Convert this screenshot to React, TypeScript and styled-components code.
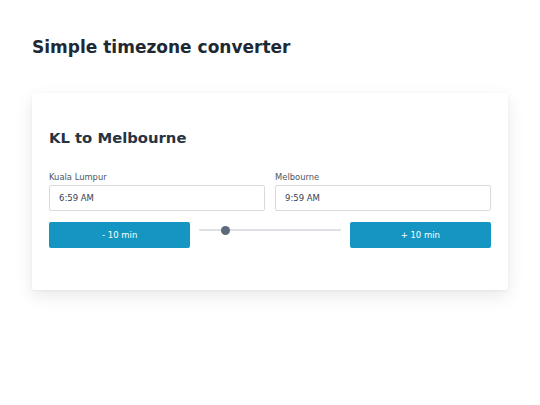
import React, { useState } from 'react';
import styled, { createGlobalStyle } from 'styled-components';

const GlobalStyle = createGlobalStyle`
  html, body {
    margin: 0;
    padding: 0;
    background: #ffffff;
    font-family: "DejaVu Sans", Verdana, sans-serif;
  }
`;

const Page = styled.div`
  padding: 36px 32px;
`;

const Title = styled.h1`
  margin: 0 0 35px;
  font-size: 17px;
  font-weight: bold;
  color: #1f2933;
  line-height: 22px;
`;

const Card = styled.div`
  background: #fff;
  border-radius: 2px;
  box-shadow: 0 6px 18px rgba(0, 0, 0, 0.09), 0 1px 3px rgba(0, 0, 0, 0.05);
  padding: 35px 17px 42px;
`;

const CardTitle = styled.h2`
  margin: 0 0 24px;
  font-size: 14.8px;
  font-weight: bold;
  color: #263340;
  line-height: 20px;
`;

const Fields = styled.div`
  display: grid;
  grid-template-columns: 1fr 1fr;
  gap: 10px;
`;

const Field = styled.label`
  display: flex;
  flex-direction: column;
  gap: 2px;
`;

const Label = styled.span`
  font-size: 8.4px;
  color: #4b5563;
  line-height: 11px;
`;

const TimeInput = styled.input`
  box-sizing: border-box;
  height: 26px;
  border: 1px solid #d7dbe0;
  border-radius: 2px;
  padding: 0 9px;
  font-family: inherit;
  font-size: 8.5px;
  color: #374151;
  outline: none;
`;

const Controls = styled.div`
  display: grid;
  grid-template-columns: 1fr 1fr 1fr;
  gap: 9px;
  margin-top: 11px;
  align-items: start;
`;

const StepButton = styled.button`
  height: 26px;
  border: none;
  border-radius: 2px;
  background: #1596c2;
  color: #ffffff;
  font-family: inherit;
  font-size: 8.5px;
  cursor: pointer;
`;

const Slider = styled.input`
  -webkit-appearance: none;
  appearance: none;
  width: 100%;
  height: 2px;
  margin: 7px 0 0;
  background: #dde0e4;
  border-radius: 1px;
  outline: none;
  &::-webkit-slider-thumb {
    -webkit-appearance: none;
    appearance: none;
    width: 9px;
    height: 9px;
    border-radius: 50%;
    background: #5b6b7b;
    cursor: pointer;
  }
`;

const formatTime = (mins: number) => {
  const m = ((mins % 1440) + 1440) % 1440;
  const h = Math.floor(m / 60);
  const mm = m % 60;
  const suffix = h < 12 ? 'AM' : 'PM';
  const h12 = h % 12 === 0 ? 12 : h % 12;
  return `${h12}:${mm.toString().padStart(2, '0')} ${suffix}`;
};

const App: React.FC = () => {
  // minutes since midnight in Kuala Lumpur
  const [minutes, setMinutes] = useState(6 * 60 + 59);
  const [slide, setSlide] = useState(16);

  return (
    <Page>
      <GlobalStyle />
      <Title>Simple timezone converter</Title>
      <Card>
        <CardTitle>KL to Melbourne</CardTitle>
        <Fields>
          <Field>
            <Label>Kuala Lumpur</Label>
            <TimeInput readOnly value={formatTime(minutes)} />
          </Field>
          <Field>
            <Label>Melbourne</Label>
            <TimeInput readOnly value={formatTime(minutes + 180)} />
          </Field>
        </Fields>
        <Controls>
          <StepButton onClick={() => setMinutes((m) => m - 10)}>- 10 min</StepButton>
          <Slider
            type="range"
            min={0}
            max={100}
            value={slide}
            onChange={(e) => setSlide(Number(e.target.value))}
          />
          <StepButton onClick={() => setMinutes((m) => m + 10)}>+ 10 min</StepButton>
        </Controls>
      </Card>
    </Page>
  );
};

export default App;
